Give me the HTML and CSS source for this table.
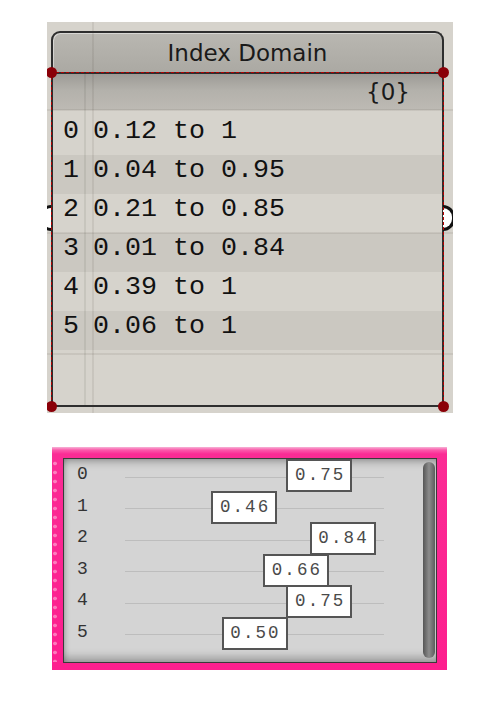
FILE: index.html
```html
<!DOCTYPE html>
<html lang="en">
<head>
  <meta charset="UTF-8" />
  <meta name="viewport" content="width=device-width, initial-scale=1.0"/>
  <title>Index Domain</title>
  <link rel="stylesheet" href="styles.css">
</head>
<body>
  <div class="page">
    <div class="canvas">
      <div class="node">
        <div class="node-head">Index Domain</div>
        <div class="node-body">
          <span class="dot tl"></span>
          <span class="dot tr"></span>
          <span class="dot bl"></span>
          <span class="dot br"></span>
          <span class="grip grip-in"></span>
          <span class="grip grip-out"></span>
          <div class="path">{0}</div>
          <div class="items">
            <div class="item"><span class="idx">0</span><span class="txt">0.12 to 1</span></div>
            <div class="item"><span class="idx">1</span><span class="txt">0.04 to 0.95</span></div>
            <div class="item"><span class="idx">2</span><span class="txt">0.21 to 0.85</span></div>
            <div class="item"><span class="idx">3</span><span class="txt">0.01 to 0.84</span></div>
            <div class="item"><span class="idx">4</span><span class="txt">0.39 to 1</span></div>
            <div class="item"><span class="idx">5</span><span class="txt">0.06 to 1</span></div>
          </div>
        </div>
      </div>
    </div>

    <div class="slider-frame">
      <div class="slider-inner">
        <div class="slider-rows">
          <div class="srow"><span class="slabel">0</span><div class="track"><span class="val" style="left:75%">0.75</span></div></div>
          <div class="srow"><span class="slabel">1</span><div class="track"><span class="val" style="left:46%">0.46</span></div></div>
          <div class="srow"><span class="slabel">2</span><div class="track"><span class="val" style="left:84%">0.84</span></div></div>
          <div class="srow"><span class="slabel">3</span><div class="track"><span class="val" style="left:66%">0.66</span></div></div>
          <div class="srow"><span class="slabel">4</span><div class="track"><span class="val" style="left:75%">0.75</span></div></div>
          <div class="srow"><span class="slabel">5</span><div class="track"><span class="val" style="left:50%">0.50</span></div></div>
        </div>
        <div class="scrollbar"></div>
      </div>
    </div>
  </div>
</body>
</html>
```

FILE: styles.css
```css
body {
  margin: 0;
  background: #fff;
  font-family: "DejaVu Sans", sans-serif;
}
.page {
  padding: 22px 0 0 47px;
}

/* grasshopper canvas */
.canvas {
  position: relative;
  overflow: hidden;
  width: 406px;
  height: 391px;
  box-sizing: border-box;
  padding-top: 9px;
  background: #d6d3cc;
}
.canvas::after {
  content: "";
  position: absolute;
  inset: 0;
  pointer-events: none;
  background:
    linear-gradient(rgba(60,50,40,0.09), rgba(60,50,40,0.09)) 45px 0 / 2px 100% no-repeat,
    linear-gradient(rgba(60,50,40,0.09), rgba(60,50,40,0.09)) 0 87px / 100% 2px no-repeat,
    linear-gradient(rgba(60,50,40,0.09), rgba(60,50,40,0.09)) 0 210px / 100% 2px no-repeat,
    linear-gradient(rgba(60,50,40,0.09), rgba(60,50,40,0.09)) 0 331px / 100% 2px no-repeat;
}
.node {
  margin-left: 4px;
  width: 393px;
}
.node-head {
  height: 39px;
  border: 2px solid #2e2e2e;
  border-bottom: none;
  border-radius: 9px 9px 0 0;
  background: linear-gradient(#b9b7b1, #aba9a3);
  box-shadow: inset 1px 1px 0 rgba(255,255,255,0.45);
  text-align: center;
  font-size: 23px;
  line-height: 40px;
  color: #1a1a1a;
}
.node-body {
  position: relative;
  height: 335px;
  box-sizing: border-box;
  border: 2px solid #2e2e2e;
  background: #d6d3cc;
}
.node-body::before {
  content: "";
  position: absolute;
  top: -2px;
  left: -2px;
  right: -2px;
  bottom: 0;
  border: 1px dashed #b40000;
  border-bottom: none;
  z-index: 2;
}
.node-body::after {
  content: "";
  position: absolute;
  top: 0;
  bottom: 0;
  left: 31px;
  width: 2px;
  background: rgba(60,50,40,0.09);
}
.dot {
  position: absolute;
  width: 11px;
  height: 11px;
  border-radius: 50%;
  background: #8a0008;
  z-index: 3;
}
.tl { top: -7px; left: -7px; }
.tr { top: -7px; right: -7px; }
.bl { bottom: -7px; left: -7px; }
.br { bottom: -7px; right: -7px; }
.grip {
  position: absolute;
  top: 131px;
  width: 9px;
  height: 20px;
  border: 3px solid #111;
  background: #fff;
}
.grip-out {
  right: -13px;
  border-left: none;
  border-radius: 0 14px 14px 0;
}
.grip-in {
  left: -14px;
  border-right: none;
  border-radius: 14px 0 0 14px;
}
.path {
  height: 36px;
  padding-right: 32px;
  background: linear-gradient(#9d9b96, #b3b1ab 45%, #bdbab4);
  text-align: right;
  font-size: 23px;
  line-height: 36px;
  color: #1a1a1a;
}
.items {
  padding-top: 6px;
}
.item {
  display: flex;
  height: 39px;
  font-family: "Liberation Mono", monospace;
  font-size: 26.67px;
  line-height: 31px;
  color: #111;
}
.item:nth-child(even) {
  background: #cbc8c1;
}
.idx {
  width: 32px;
  box-sizing: border-box;
  padding-left: 10px;
}
.txt {
  padding-left: 8px;
}

/* number slider list */
.slider-frame {
  position: relative;
  margin: 34px 0 0 5px;
  width: 395px;
  height: 223px;
  box-sizing: border-box;
  padding: 11px 10px 7px 11px;
  background: linear-gradient(#f6b3d6 0, #fb5aab 3px, #fb2c95 7px, #fd1f8e 100%);
}
.slider-frame::before {
  content: "";
  position: absolute;
  left: 0;
  top: 12px;
  bottom: 8px;
  width: 6px;
  background: radial-gradient(circle, rgba(255,255,255,0.4) 1.5px, transparent 2.2px) 0 0 / 6px 9px repeat-y;
}
.slider-inner {
  display: flex;
  height: 100%;
  box-sizing: border-box;
  border: 1px solid #3a3a3a;
  background: #d4d4d4;
  box-shadow: inset 0 7px 8px -5px rgba(0,0,0,0.35), inset 0 -10px 10px -6px rgba(0,0,0,0.3), inset 4px 0 6px -4px rgba(0,0,0,0.25);
}
.slider-rows {
  flex: 1;
  padding-top: 1px;
}
.srow {
  display: flex;
  align-items: center;
  height: 31.5px;
}
.slabel {
  width: 61px;
  box-sizing: border-box;
  padding: 0 0 3px 13px;
  font-family: "Liberation Mono", monospace;
  font-size: 18px;
  color: #333;
}
.track {
  position: relative;
  width: 259px;
  height: 100%;
}
.track::before {
  content: "";
  position: absolute;
  left: 0;
  right: 0;
  top: 50%;
  margin-top: 1px;
  height: 1px;
  background: #bdbdbd;
}
.val {
  position: absolute;
  top: 50%;
  width: 66px;
  height: 33px;
  margin: -16.5px 0 0 -33px;
  box-sizing: border-box;
  border: 2px solid #555;
  background: #fff;
  padding-left: 2px;
  text-align: center;
  font-family: "Liberation Mono", monospace;
  font-size: 17.5px;
  letter-spacing: 2.1px;
  line-height: 29px;
  color: #4a4a4a;
}
.scrollbar {
  width: 12px;
  margin: 3px 1px 4px 2px;
  border-radius: 6px;
  background: linear-gradient(90deg, #565656, #8c8c8c 50%, #5c5c5c);
}
```
